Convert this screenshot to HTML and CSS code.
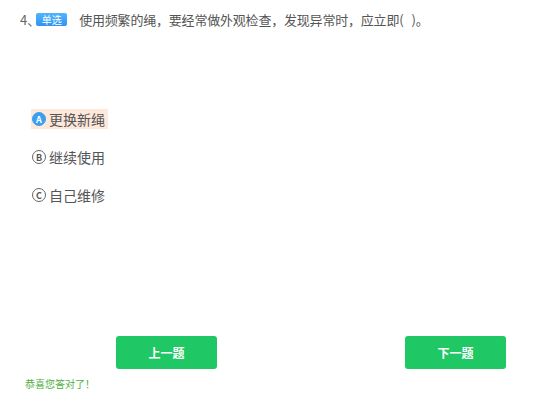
FILE: index.html
```html
<!DOCTYPE html>
<html lang="zh-CN">
<head>
  <meta charset="UTF-8">
  <meta name="viewport" content="width=device-width, initial-scale=1.0">
  <title>答题</title>
  <link rel="stylesheet" href="styles.css">
</head>
<body>
  <div class="quiz">
    <div class="question">
      <span class="num">4、</span>
      <span class="badge">单选</span>
      <span class="title">使用频繁的绳，要经常做外观检查，发现异常时，应立即(&nbsp;&nbsp;&nbsp;)。</span>
    </div>

    <ul class="options">
      <li class="option selected"><span class="mark">A</span>更换新绳</li>
      <li class="option"><span class="mark">B</span>继续使用</li>
      <li class="option"><span class="mark">C</span>自己维修</li>
    </ul>

    <div class="actions">
      <button class="btn">上一题</button>
      <button class="btn">下一题</button>
    </div>
    <p class="result">恭喜您答对了！</p>
  </div>
</body>
</html>
```

FILE: styles.css
```css
body {
  margin: 0;
  font-family: "Noto Sans CJK SC", "Noto Sans", sans-serif;
  color: #555;
  background: #fff;
}
.quiz {
  padding: 10px 20px 0 20px;
}
.question {
  display: flex;
  align-items: center;
  height: 18px;
  font-size: 13px;
}
.num {
  color: #666;
}
.badge {
  display: inline-block;
  width: 31px;
  height: 13px;
  line-height: 13px;
  margin-left: -4px;
  margin-right: 12px;
  border-radius: 2px;
  background: linear-gradient(#52b4ff, #2f94f2);
  color: #fff;
  font-size: 10px;
  text-align: center;
}
.title {
  color: #555;
  letter-spacing: -0.2px;
}
.options {
  list-style: none;
  margin: 81px 0 0 0;
  padding: 0 0 0 11px;
  display: flex;
  flex-direction: column;
  align-items: flex-start;
  gap: 18px;
}
.option {
  display: flex;
  align-items: center;
  height: 20px;
  padding: 0 3px 0 1px;
  font-size: 14px;
  color: #555;
}
.option.selected {
  background: #fde8da;
}
.mark {
  display: inline-flex;
  align-items: center;
  justify-content: center;
  box-sizing: border-box;
  width: 14px;
  height: 14px;
  margin-right: 3px;
  border: 1px solid #666;
  border-radius: 50%;
  font-size: 9px;
  font-weight: bold;
  color: #555;
}
.selected .mark {
  border-color: #3a9ff2;
  background: #3a9ff2;
  color: #fff;
}
.actions {
  display: flex;
  justify-content: space-between;
  margin-top: 131px;
  padding: 0 31px 0 96px;
}
.btn {
  width: 101px;
  height: 33px;
  border: none;
  border-radius: 3px;
  background: #1fc864;
  color: #fff;
  font-family: inherit;
  font-size: 12px;
  font-weight: bold;
  cursor: pointer;
}
.result {
  margin: 7px 0 0 5px;
  font-size: 10px;
  color: #4caf3c;
}
```
